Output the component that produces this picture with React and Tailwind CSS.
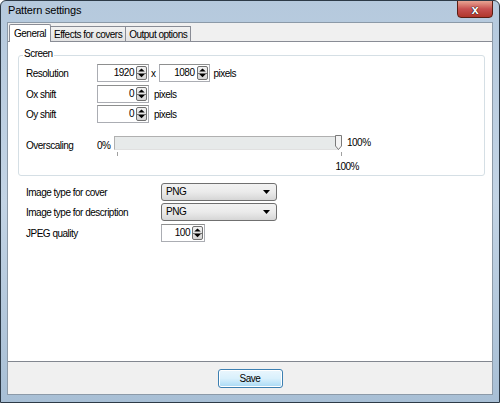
import React from 'react'

function Spin({ value, width }) {
  return (
    <div className={`flex items-center h-[18px] bg-white border border-[#abadb3] border-t-[#8e8f8f] ${width}`}>
      <span className="flex-1 text-right pr-[2px] leading-none">{value}</span>
      <div className="flex flex-col w-[11px] h-[14px] mr-[1px] border border-[#707070] rounded-[2px] bg-gradient-to-b from-[#f2f2f2] to-[#d4d4d4]">
        <svg viewBox="0 0 9 6" className="w-[9px] h-[6px]"><path d="M1 5 L4.5 1.5 L8 5 Z" fill="#000" /></svg>
        <div className="h-px bg-[#707070]" />
        <svg viewBox="0 0 9 6" className="w-[9px] h-[6px]"><path d="M1 1 L4.5 4.5 L8 1 Z" fill="#000" /></svg>
      </div>
    </div>
  )
}

function Combo({ value }) {
  return (
    <div className="flex items-center w-[116px] h-[18px] rounded-[3px] border border-[#707070] bg-gradient-to-b from-[#f2f2f2] via-[#ebebeb] to-[#d6d6d6] px-[4px]">
      <span className="flex-1 leading-none">{value}</span>
      <svg viewBox="0 0 7 4" className="w-[7px] h-[4px] mr-[2px]"><path d="M0 0 H7 L3.5 4 Z" fill="#000" /></svg>
    </div>
  )
}

export default function App() {
  return (
    <div
      className="w-[500px] h-[403px] flex flex-col bg-gradient-to-b from-[#b5c9dd] via-[#c3d4e5] to-[#a8bfd5] border border-[#2d3a47] rounded-t-[6px] text-[10px] tracking-[-0.5px] text-black overflow-hidden"
      style={{ fontFamily: '"Liberation Sans", Arial, sans-serif' }}
    >
      {/* title bar */}
      <div className="h-[21px] flex items-start relative">
        <span className="ml-[7px] mt-[4px] text-[11px] tracking-[-0.2px] text-black leading-none">Pattern settings</span>
        <div className="absolute right-[6px] top-[-1px] w-[36px] h-[18px] rounded-b-[4px] border border-[#5a1e14] bg-gradient-to-b from-[#e8a493] via-[#c75050] to-[#b0362a] flex items-center justify-center">
          <span className="text-white font-bold text-[13px] leading-none tracking-normal" style={{ textShadow: '0 0 1px #000, 0 0 1px #000' }}>x</span>
        </div>
      </div>

      {/* client */}
      <div className="flex-1 mx-[6px] mb-[7px] flex flex-col bg-[#f0f0f0] border border-[#8c9aa8]">
        {/* tabs */}
        <div className="flex items-end h-[18px] pl-[1px] pt-[1px] relative z-10">
          <div className="h-[18px] px-[4px] bg-white border border-[#898c95] border-b-0 rounded-t-[2px] flex items-center mb-[-1px]">General</div>
          <div className="h-[15px] px-[3px] bg-gradient-to-b from-[#f2f2f2] to-[#e3e3e3] border border-[#898c95] border-b-0 border-l-0 flex items-center">Effects for covers</div>
          <div className="h-[15px] px-[3px] bg-gradient-to-b from-[#f2f2f2] to-[#e3e3e3] border border-[#898c95] border-b-0 border-l-0 flex items-center">Output options</div>
        </div>

        {/* panel */}
        <div className="flex-1 bg-white border-t border-[#898c95] border-b border-b-[#828790] pl-[10px] pr-[7px] pt-[13px]">
          <div className="relative h-[121px] border border-[#d5dfe5] rounded-[3px] pl-[7px] pt-[7px]">
            <span className="absolute left-[4px] top-[-7px] bg-white px-[1px] leading-none">Screen</span>
            <div className="flex items-center h-[20px]">
              <span className="w-[71px]">Resolution</span>
              <Spin value="1920" width="w-[52px]" />
              <span className="ml-[2px] mr-[3px]">x</span>
              <Spin value="1080" width="w-[51px]" />
              <span className="ml-[4px]">pixels</span>
            </div>
            <div className="flex items-center h-[20px] mt-[1px]">
              <span className="w-[71px]">Ox shift</span>
              <Spin value="0" width="w-[52px]" />
              <span className="ml-[5px]">pixels</span>
            </div>
            <div className="flex items-center h-[20px]">
              <span className="w-[71px]">Oy shift</span>
              <Spin value="0" width="w-[52px]" />
              <span className="ml-[5px]">pixels</span>
            </div>
            <div className="flex items-start mt-[11px]">
              <span className="w-[71px] mt-[3px]">Overscaling</span>
              <span className="w-[17px] mt-[3px]">0%</span>
              <div className="flex flex-col">
                <div className="flex items-center">
                  <div className="w-[225px] h-[14px] bg-[#e7eaea] border border-[#b0b0b0] border-b-[#e0e0e0]" />
                  <svg viewBox="0 0 7 15" className="w-[7px] h-[15px] ml-[-4px]">
                    <path d="M0.5 0.5 H6.5 V11 L3.5 14.5 L0.5 11 Z" fill="#f4f4f4" stroke="#7a7a7a" />
                  </svg>
                  <span className="ml-[5px]">100%</span>
                </div>
                <div className="flex justify-between w-[228px] pl-[3px] mt-[2px]">
                  <div className="w-px h-[4px] bg-[#a0a0a0]" />
                  <div className="w-px h-[4px] bg-[#a0a0a0]" />
                </div>
                <div className="w-[245px] text-right mt-[3px]">100%</div>
              </div>
            </div>
          </div>

          <div className="pl-[8px] mt-[6px]">
            <div className="flex items-center h-[20px]">
              <span className="w-[135px]">Image type for cover</span>
              <Combo value="PNG" />
            </div>
            <div className="flex items-center h-[20px]">
              <span className="w-[135px]">Image type for description</span>
              <Combo value="PNG" />
            </div>
            <div className="flex items-center h-[22px]">
              <span className="w-[135px]">JPEG quality</span>
              <Spin value="100" width="w-[44px]" />
            </div>
          </div>
        </div>

        {/* bottom */}
        <div className="h-[32px] flex items-center justify-center pt-[1px]">
          <button className="w-[65px] h-[19px] rounded-[3px] border border-[#3c7fb1] bg-gradient-to-b from-[#eaf6fd] via-[#d9f0fc] to-[#a7d9f5] shadow-[inset_0_0_0_1px_#ffffff]">Save</button>
        </div>
      </div>
    </div>
  )
}
